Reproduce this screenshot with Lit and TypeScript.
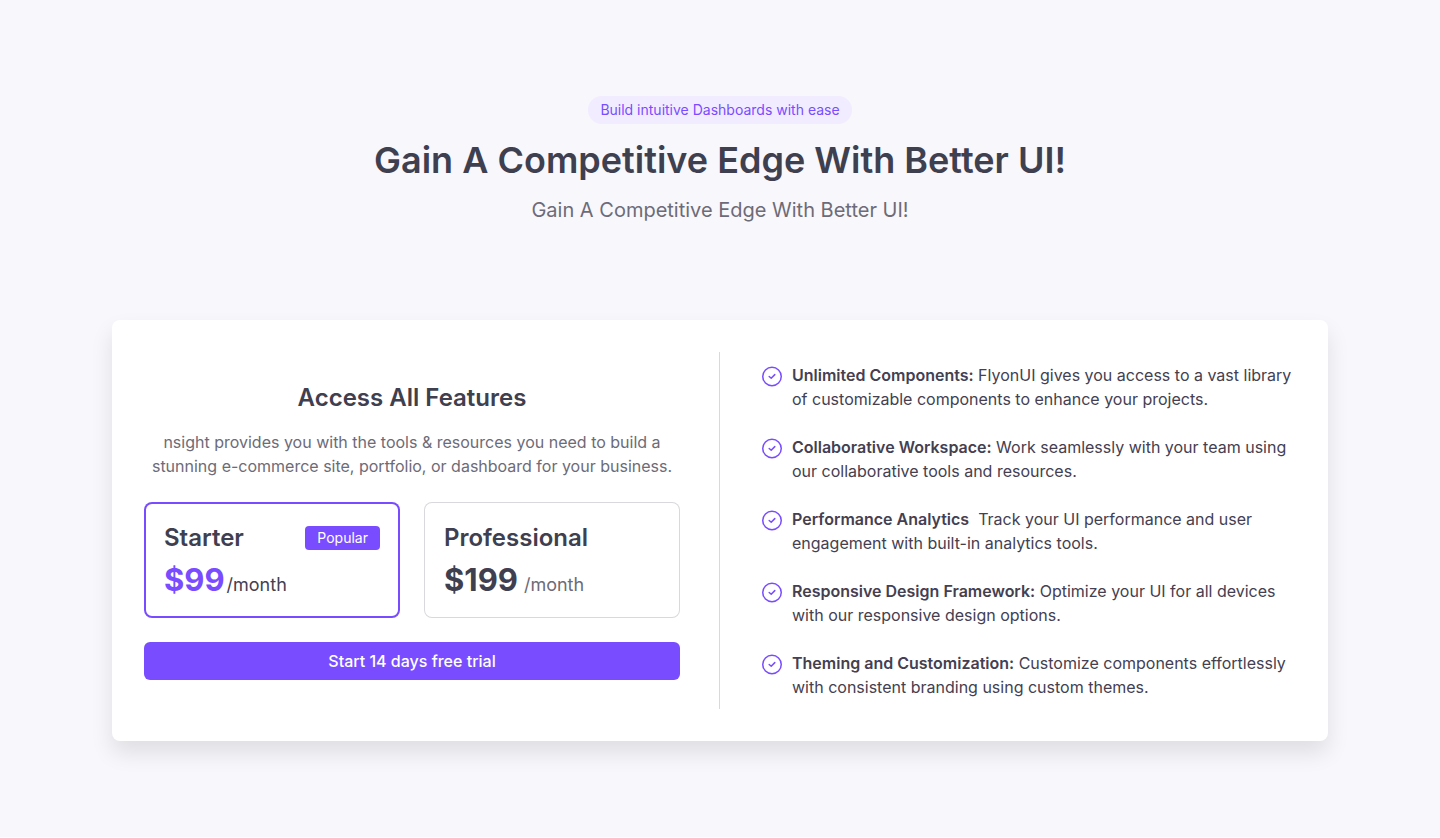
import { LitElement, html, css, nothing } from "lit";
import { customElement, state } from "lit/decorators.js";
import { classMap } from "lit/directives/class-map.js";

interface Plan {
  id: string;
  name: string;
  price: string;
  popular?: boolean;
}

interface Feature {
  title: string;
  text: string;
}

const PLANS: Plan[] = [
  { id: "starter", name: "Starter", price: "$99", popular: true },
  { id: "professional", name: "Professional", price: "$199" },
];

const FEATURES: Feature[] = [
  {
    title: "Unlimited Components:",
    text: " FlyonUI gives you access to a vast library of customizable components to enhance your projects.",
  },
  {
    title: "Collaborative Workspace:",
    text: " Work seamlessly with your team using our collaborative tools and resources.",
  },
  {
    title: "Performance Analytics",
    text: "\u00a0 Track your UI performance and user engagement with built-in analytics tools.",
  },
  {
    title: "Responsive Design Framework:",
    text: " Optimize your UI for all devices with our responsive design options.",
  },
  {
    title: "Theming and Customization:",
    text: " Customize components effortlessly with consistent branding using custom themes.",
  },
];

@customElement("app-root")
export class AppRoot extends LitElement {
  @state() private selected = "starter";

  static styles = css`
    :host {
      --primary: #794dff;
      --heading: #3f404f;
      --text: #444051;
      --muted: #6d6b77;
      --line: #d9d9dd;
      display: block;
      font-family: Inter, "Liberation Sans", sans-serif;
      font-size: 16px;
      line-height: 24px;
      color: var(--text);
      background: #f8f7fc;
    }
    * {
      box-sizing: border-box;
    }
    h1,
    h2,
    p,
    ul,
    fieldset {
      margin: 0;
      padding: 0;
      border: 0;
    }
    .page {
      max-width: 1280px;
      margin: 0 auto;
      padding: 96px 32px;
      display: flex;
      flex-direction: column;
      gap: 96px;
    }
    .intro {
      display: flex;
      flex-direction: column;
      align-items: center;
      gap: 12px;
      text-align: center;
    }
    .tag {
      padding: 4px 12px;
      border-radius: 14px;
      background: #f1ecff;
      color: var(--primary);
      font-size: 14px;
      line-height: 20px;
    }
    .headline {
      font-size: 36px;
      line-height: 48px;
      font-weight: 600;
      color: var(--heading);
    }
    .lead {
      font-size: 20px;
      line-height: 28px;
      color: var(--muted);
    }
    .card {
      display: grid;
      grid-template-columns: 1fr 1fr;
      padding: 32px;
      border-radius: 8px;
      background: #fff;
      box-shadow: 0 12px 22px rgba(0, 0, 0, 0.1);
    }
    .offer {
      display: flex;
      flex-direction: column;
      gap: 24px;
      padding: 30px 39px 29px 0;
      border-right: 1px solid var(--line);
    }
    .about {
      display: flex;
      flex-direction: column;
      gap: 16px;
      text-align: center;
      color: var(--muted);
    }
    .title {
      font-size: 24px;
      line-height: 32px;
      font-weight: 600;
      color: var(--heading);
    }
    .plans {
      display: grid;
      grid-template-columns: 1fr 1fr;
      gap: 24px;
      min-width: 0;
    }
    .plan {
      display: flex;
      flex-direction: column;
      gap: 8px;
      padding: 20px;
      border-radius: 8px;
      box-shadow: inset 0 0 0 1px var(--line);
      cursor: pointer;
    }
    .plan.selected {
      box-shadow: inset 0 0 0 2px var(--primary);
    }
    .radio {
      position: absolute;
      opacity: 0;
      pointer-events: none;
    }
    .plan-head {
      display: flex;
      align-items: center;
      justify-content: space-between;
    }
    .popular {
      padding: 2px 12px;
      border-radius: 4px;
      background: var(--primary);
      color: #fff;
      font-size: 14px;
      line-height: 20px;
    }
    .cost {
      display: flex;
      align-items: baseline;
      gap: 6px;
      color: var(--muted);
    }
    .selected .cost {
      gap: 2px;
      color: var(--text);
    }
    .price {
      font-size: 31px;
      line-height: 36px;
      font-weight: 700;
      color: var(--heading);
    }
    .selected .price {
      color: var(--primary);
    }
    .period {
      font-size: 18px;
      line-height: 24px;
    }
    .cta {
      height: 38px;
      border: 0;
      border-radius: 6px;
      background: var(--primary);
      color: #fff;
      font: 500 16px/24px Inter, "Liberation Sans", sans-serif;
      cursor: pointer;
    }
    .features {
      display: flex;
      flex-direction: column;
      justify-content: center;
      gap: 24px;
      padding-left: 40px;
      list-style: none;
    }
    .feature {
      display: flex;
      align-items: flex-start;
      gap: 8px;
    }
    .feature-title {
      font-weight: 600;
    }
    .check {
      flex: none;
      width: 24px;
      height: 24px;
      margin-top: 2px;
      fill: none;
      stroke: var(--primary);
      stroke-width: 1.5;
      stroke-linecap: round;
      stroke-linejoin: round;
    }
    @media (max-width: 900px) {
      .card {
        grid-template-columns: 1fr;
      }
      .offer {
        padding-right: 0;
        border-right: 0;
      }
      .features {
        padding-left: 0;
      }
    }
  `;

  private renderPlan(plan: Plan) {
    const selected = plan.id === this.selected;
    return html`
      <label class=${classMap({ plan: true, selected })}>
        <input
          class="radio"
          type="radio"
          name="plan"
          .value=${plan.id}
          .checked=${selected}
          @change=${() => (this.selected = plan.id)}
        />
        <span class="plan-head">
          <span class="title">${plan.name}</span>
          ${plan.popular ? html`<span class="popular">Popular</span>` : nothing}
        </span>
        <span class="cost">
          <span class="price">${plan.price}</span>
          <span class="period">/month</span>
        </span>
      </label>
    `;
  }

  private renderFeature(feature: Feature) {
    return html`
      <li class="feature">
        <svg class="check" viewBox="0 0 24 24" aria-hidden="true">
          <circle cx="12" cy="11.5" r="9.25" />
          <path d="M9.2 11.5L11.2 13.2L14.8 9.6" />
        </svg>
        <p><span class="feature-title">${feature.title}</span>${feature.text}</p>
      </li>
    `;
  }

  render() {
    return html`
      <main class="page">
        <header class="intro">
          <span class="tag">Build intuitive Dashboards with ease</span>
          <h1 class="headline">Gain A Competitive Edge With Better UI!</h1>
          <p class="lead">Gain A Competitive Edge With Better UI!</p>
        </header>
        <section class="card">
          <div class="offer">
            <div class="about">
              <h2 class="title">Access All Features</h2>
              <p>
                nsight provides you with the tools &amp; resources you need to build a stunning
                e-commerce site, portfolio, or dashboard for your business.
              </p>
            </div>
            <fieldset class="plans" aria-label="Plan">
              ${PLANS.map((plan) => this.renderPlan(plan))}
            </fieldset>
            <button class="cta" type="button">Start 14 days free trial</button>
          </div>
          <ul class="features">
            ${FEATURES.map((feature) => this.renderFeature(feature))}
          </ul>
        </section>
      </main>
    `;
  }
}
